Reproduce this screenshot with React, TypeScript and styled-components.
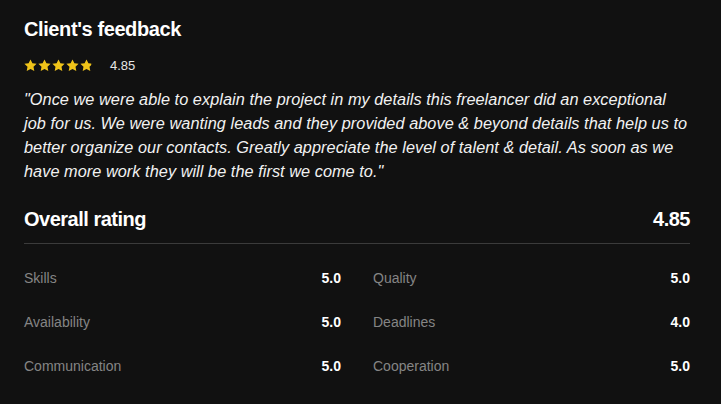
import React from 'react';
import styled, { createGlobalStyle } from 'styled-components';

const GlobalStyle = createGlobalStyle`
  html, body {
    margin: 0;
    padding: 0;
    background: #111111;
  }
  body {
    font-family: "Liberation Sans", Arial, sans-serif;
    color: #f2f2f2;
  }
`;

const Page = styled.div`
  padding: 16px 31px 0 24px;
  min-height: 404px;
  box-sizing: border-box;
`;

const Title = styled.h2`
  margin: 0;
  font-size: 20px;
  line-height: 26px;
  font-weight: 700;
  letter-spacing: -0.4px;
  color: #ffffff;
`;

const StarRow = styled.div`
  display: flex;
  align-items: center;
  margin-top: 16px;
  height: 14px;
`;

const Stars = styled.div`
  display: flex;
  gap: 1px;
`;

const StarScore = styled.span`
  margin-left: 17px;
  font-size: 13px;
  color: #e6e6e6;
`;

const Quote = styled.p`
  margin: 15px 0 0;
  font-size: 16.3px;
  line-height: 24px;
  font-style: italic;
  letter-spacing: 0.05px;
  color: #f2f2f2;
`;

const Header = styled.div`
  display: flex;
  justify-content: space-between;
  align-items: center;
  margin-top: 23px;
  padding-bottom: 11px;
  border-bottom: 1px solid #3b3b3b;
`;

const HeaderText = styled.span`
  font-size: 20px;
  line-height: 26px;
  font-weight: 700;
  letter-spacing: -0.5px;
  color: #ffffff;
`;

const Grid = styled.div`
  display: grid;
  grid-template-columns: 1fr 1fr;
  column-gap: 32px;
  padding-top: 12px;
`;

const Row = styled.div`
  display: flex;
  justify-content: space-between;
  align-items: center;
  padding: 12px 0;
  font-size: 14px;
  line-height: 20px;
`;

const Label = styled.span`
  color: #858585;
`;

const Value = styled.span`
  color: #ffffff;
  font-weight: 700;
`;

const STAR_PATH =
  'M6.5 0.4l1.9 3.9 4.2 0.55-3.1 2.95 0.8 4.2L6.5 9.95 2.7 12l0.8-4.2L0.4 4.85l4.2-0.55z';

const Star: React.FC<{ fill: number; id: string }> = ({ fill, id }) => (
  <svg width="13" height="13" viewBox="0 0 13 13">
    <defs>
      <linearGradient id={id}>
        <stop offset={`${fill * 100}%`} stopColor="#f0c419" />
        <stop offset={`${fill * 100}%`} stopColor="#5a4a12" />
      </linearGradient>
    </defs>
    <path d={STAR_PATH} fill={`url(#${id})`} />
  </svg>
);

const ratings = [
  ['Skills', '5.0', 'Quality', '5.0'],
  ['Availability', '5.0', 'Deadlines', '4.0'],
  ['Communication', '5.0', 'Cooperation', '5.0'],
];

const App: React.FC = () => {
  const score = 4.85;
  return (
    <>
      <GlobalStyle />
      <Page>
        <Title>Client's feedback</Title>
        <StarRow>
          <Stars>
            {[0, 1, 2, 3, 4].map((i) => (
              <Star key={i} id={`star-${i}`} fill={Math.max(0, Math.min(1, score - i))} />
            ))}
          </Stars>
          <StarScore>{score}</StarScore>
        </StarRow>
        <Quote>
          "Once we were able to explain the project in my details this freelancer did an exceptional
          job for us. We were wanting leads and they provided above &amp; beyond details that help us to
          better organize our contacts. Greatly appreciate the level of talent &amp; detail. As soon as we
          have more work they will be the first we come to."
        </Quote>
        <Header>
          <HeaderText>Overall rating</HeaderText>
          <HeaderText>{score}</HeaderText>
        </Header>
        <Grid>
          {ratings.map(([l1, v1, l2, v2]) => (
            <React.Fragment key={l1}>
              <Row>
                <Label>{l1}</Label>
                <Value>{v1}</Value>
              </Row>
              <Row>
                <Label>{l2}</Label>
                <Value>{v2}</Value>
              </Row>
            </React.Fragment>
          ))}
        </Grid>
      </Page>
    </>
  );
};

export default App;
